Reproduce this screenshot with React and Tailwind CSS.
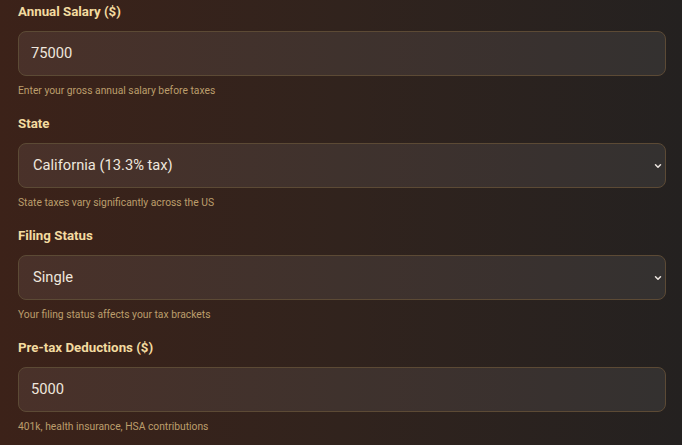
import React from "react";

const fields = [
  { label: "Annual Salary ($)", value: "75000", hint: "Enter your gross annual salary before taxes" },
  { label: "State", value: "California (13.3% tax)", hint: "State taxes vary significantly across the US", select: true },
  { label: "Filing Status", value: "Single", hint: "Your filing status affects your tax brackets", select: true },
  { label: "Pre-tax Deductions ($)", value: "5000", hint: "401k, health insurance, HSA contributions" },
];

const Chevron = () => (
  <svg width="8" height="8" viewBox="0 0 8 8" className="text-[#ece6e0]">
    <path d="M1.5 2.8 L4 5.3 L6.5 2.8" fill="none" stroke="currentColor" strokeWidth="1.5" strokeLinecap="round" strokeLinejoin="round" />
  </svg>
);

export default function App() {
  return (
    <div
      className="w-[682px] h-[445px] overflow-hidden bg-gradient-to-r from-[#3c2219] via-[#31231d] to-[#242120] pl-[18px] pr-[16px] pt-[3px]"
      style={{ fontFamily: "Roboto, 'Liberation Sans', sans-serif" }}
    >
      <div className="flex flex-col gap-[17px]">
        {fields.map((f) => (
          <div key={f.label} className="flex flex-col">
            <label className="text-[13.3px] leading-[18px] font-bold text-[#f3dba0]">{f.label}</label>
            <div className="mt-[10px] h-[45px] rounded-[8px] border border-[#5c4a35] bg-white/[0.07] flex items-center justify-between pl-[12px] pr-[3px]">
              <span className={`text-[14.7px] text-[#efe7de] ${f.select ? "pl-[2px]" : ""}`}>{f.value}</span>
              {f.select && <Chevron />}
            </div>
            <p className="mt-[8px] text-[10.3px] leading-[14px] text-[#bc9e6c]">{f.hint}</p>
          </div>
        ))}
      </div>
    </div>
  );
}
